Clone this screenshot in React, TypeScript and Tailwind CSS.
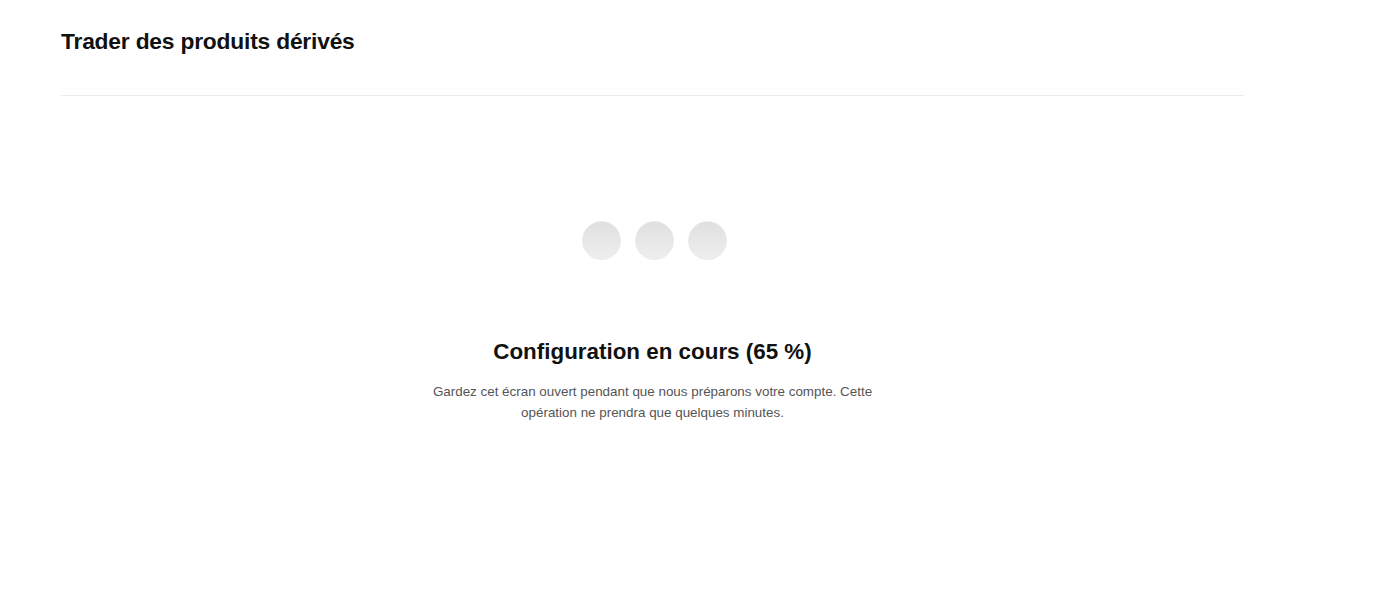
// Écran de configuration du compte (chargement en cours)

function LoadingDots() {
  return (
    <div className="ml-[3px] flex items-center gap-[14px]">
      {[0, 1, 2].map((i) => (
        <span
          key={i}
          className="block h-[39px] w-[39px] rounded-full bg-gradient-to-b from-[#e0e0e0] to-[#eeeeee] border border-[#eaeaea]"
        />
      ))}
    </div>
  );
}

export default function App() {
  return (
    <div className="min-h-[589px] bg-white font-['Liberation_Sans',Arial,sans-serif]">
      <div className="ml-[61px] w-[1183px]">
        {/* En-tête */}
        <div className="pt-[21px] pb-[34px] border-b border-[#ebebeb]">
          <h1 className="text-[22.8px] leading-[40px] font-bold tracking-[-0.2px] text-[#111]">
            Trader des produits dérivés
          </h1>
        </div>

        {/* Contenu central */}
        <div className="flex flex-col items-center pt-[125px]">
          <LoadingDots />
          <h2 className="mt-[78px] text-[22.4px] leading-[28px] font-bold text-[#111]">
            Configuration en cours (65 %)
          </h2>
          <p className="mt-[15px] w-[460px] text-center text-[13.4px] leading-[21px] text-[#555]">
            Gardez cet écran ouvert pendant que nous préparons votre compte. Cette opération ne prendra que quelques minutes.
          </p>
        </div>
      </div>
    </div>
  );
}
